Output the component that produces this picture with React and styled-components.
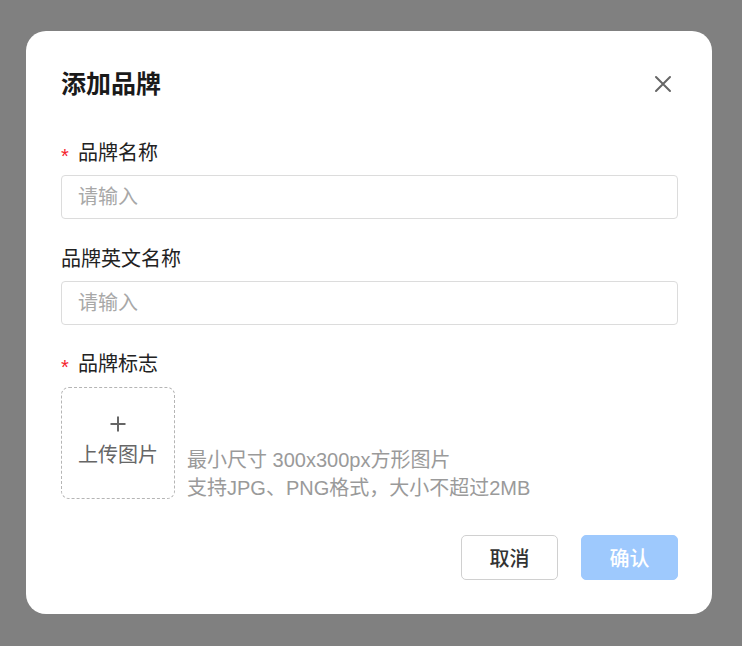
import React from "react";
import styled, { createGlobalStyle } from "styled-components";

const GlobalStyle = createGlobalStyle`
    html, body {
        margin: 0;
        padding: 0;
        background: #808080;
        font-family: "Liberation Sans", "Noto Sans CJK SC", sans-serif;
    }
`;

export default function App() {
    return (
        <>
            <GlobalStyle />
            <Overlay>
                <Modal>
                    <Header>
                        <Title>添加品牌</Title>
                        <Close aria-label="close">
                            <svg width="18" height="18" viewBox="0 0 18 18">
                                <path d="M2 2 L16 16 M16 2 L2 16" stroke="#666" strokeWidth="2" strokeLinecap="round" />
                            </svg>
                        </Close>
                    </Header>

                    <Field>
                        <Label><Star>*</Star>品牌名称</Label>
                        <Input placeholder="请输入" />
                    </Field>

                    <Field gap="27px">
                        <Label>品牌英文名称</Label>
                        <Input placeholder="请输入" />
                    </Field>

                    <Field gap="26px">
                        <Label><Star>*</Star>品牌标志</Label>
                        <UploadRow>
                            <Upload>
                                <svg width="16" height="16" viewBox="0 0 16 16">
                                    <path d="M8 0.5 V15.5 M0.5 8 H15.5" stroke="#666" strokeWidth="2" />
                                </svg>
                                <UploadText>上传图片</UploadText>
                            </Upload>
                            <Hint>
                                <div>最小尺寸 300x300px方形图片</div>
                                <div>支持JPG、PNG格式，大小不超过2MB</div>
                            </Hint>
                        </UploadRow>
                    </Field>

                    <Footer>
                        <Button>取消</Button>
                        <Button primary>确认</Button>
                    </Footer>
                </Modal>
            </Overlay>
        </>
    );
}

const Overlay = styled.div`
    width: 742px;
    height: 646px;
    padding: 31px 0 0 26px;
    box-sizing: border-box;
`;

const Modal = styled.div`
    width: 686px;
    height: 583px;
    box-sizing: border-box;
    background: #fff;
    border-radius: 20px;
    padding: 38px 34px 34px 35px;
    display: flex;
    flex-direction: column;
`;

const Header = styled.div`
    display: flex;
    justify-content: space-between;
    align-items: center;
    height: 30px;
    margin-bottom: 41px;
`;

const Title = styled.h1`
    margin: 0;
    font-size: 25px;
    line-height: 30px;
    font-weight: 700;
    color: #1a1a1a;
`;

const Close = styled.button`
    border: none;
    background: none;
    padding: 0;
    margin-right: 6px;
    width: 18px;
    height: 18px;
    display: flex;
    cursor: pointer;
`;

const Field = styled.div`
    display: flex;
    flex-direction: column;
    margin-top: ${p => p.gap || "0"};
`;

const Label = styled.label`
    display: flex;
    align-items: center;
    font-size: 20px;
    line-height: 26px;
    color: #222;
    margin-bottom: 9px;
`;

const Star = styled.span`
    color: #f5222d;
    font-size: 20px;
    width: 17px;
    position: relative;
    top: 3px;
`;

const Input = styled.input`
    height: 44px;
    box-sizing: border-box;
    border: 1px solid #dcdcdc;
    border-radius: 4px;
    padding: 0 16px;
    font-family: inherit;
    font-size: 20px;
    color: #333;
    outline: none;

    &::placeholder {
        color: #a8a8a8;
    }
`;

const UploadRow = styled.div`
    display: flex;
    align-items: flex-end;
    gap: 12px;
    margin-top: 1px;
`;

const Upload = styled.div`
    width: 114px;
    height: 112px;
    box-sizing: border-box;
    border: 1.5px dashed #b5b5b5;
    border-radius: 8px;
    display: flex;
    flex-direction: column;
    align-items: center;
    justify-content: center;
    gap: 10px;
    color: #666;
    padding-bottom: 2px;
`;

const UploadText = styled.div`
    font-size: 20px;
    line-height: 26px;
`;

const Hint = styled.div`
    font-size: 20px;
    line-height: 28px;
    color: #9a9a9a;
    margin-bottom: -3px;
`;

const Footer = styled.div`
    display: flex;
    justify-content: flex-end;
    gap: 23px;
    margin-top: auto;
`;

const Button = styled.button`
    width: 97px;
    height: 45px;
    box-sizing: border-box;
    border-radius: 5px;
    font-family: inherit;
    font-size: 20px;
    font-weight: 500;
    cursor: pointer;
    border: 1px solid ${p => (p.primary ? "#9ec9fd" : "#d0d0d0")};
    background: ${p => (p.primary ? "#9ec9fd" : "#fff")};
    color: ${p => (p.primary ? "#fff" : "#333")};
`;
